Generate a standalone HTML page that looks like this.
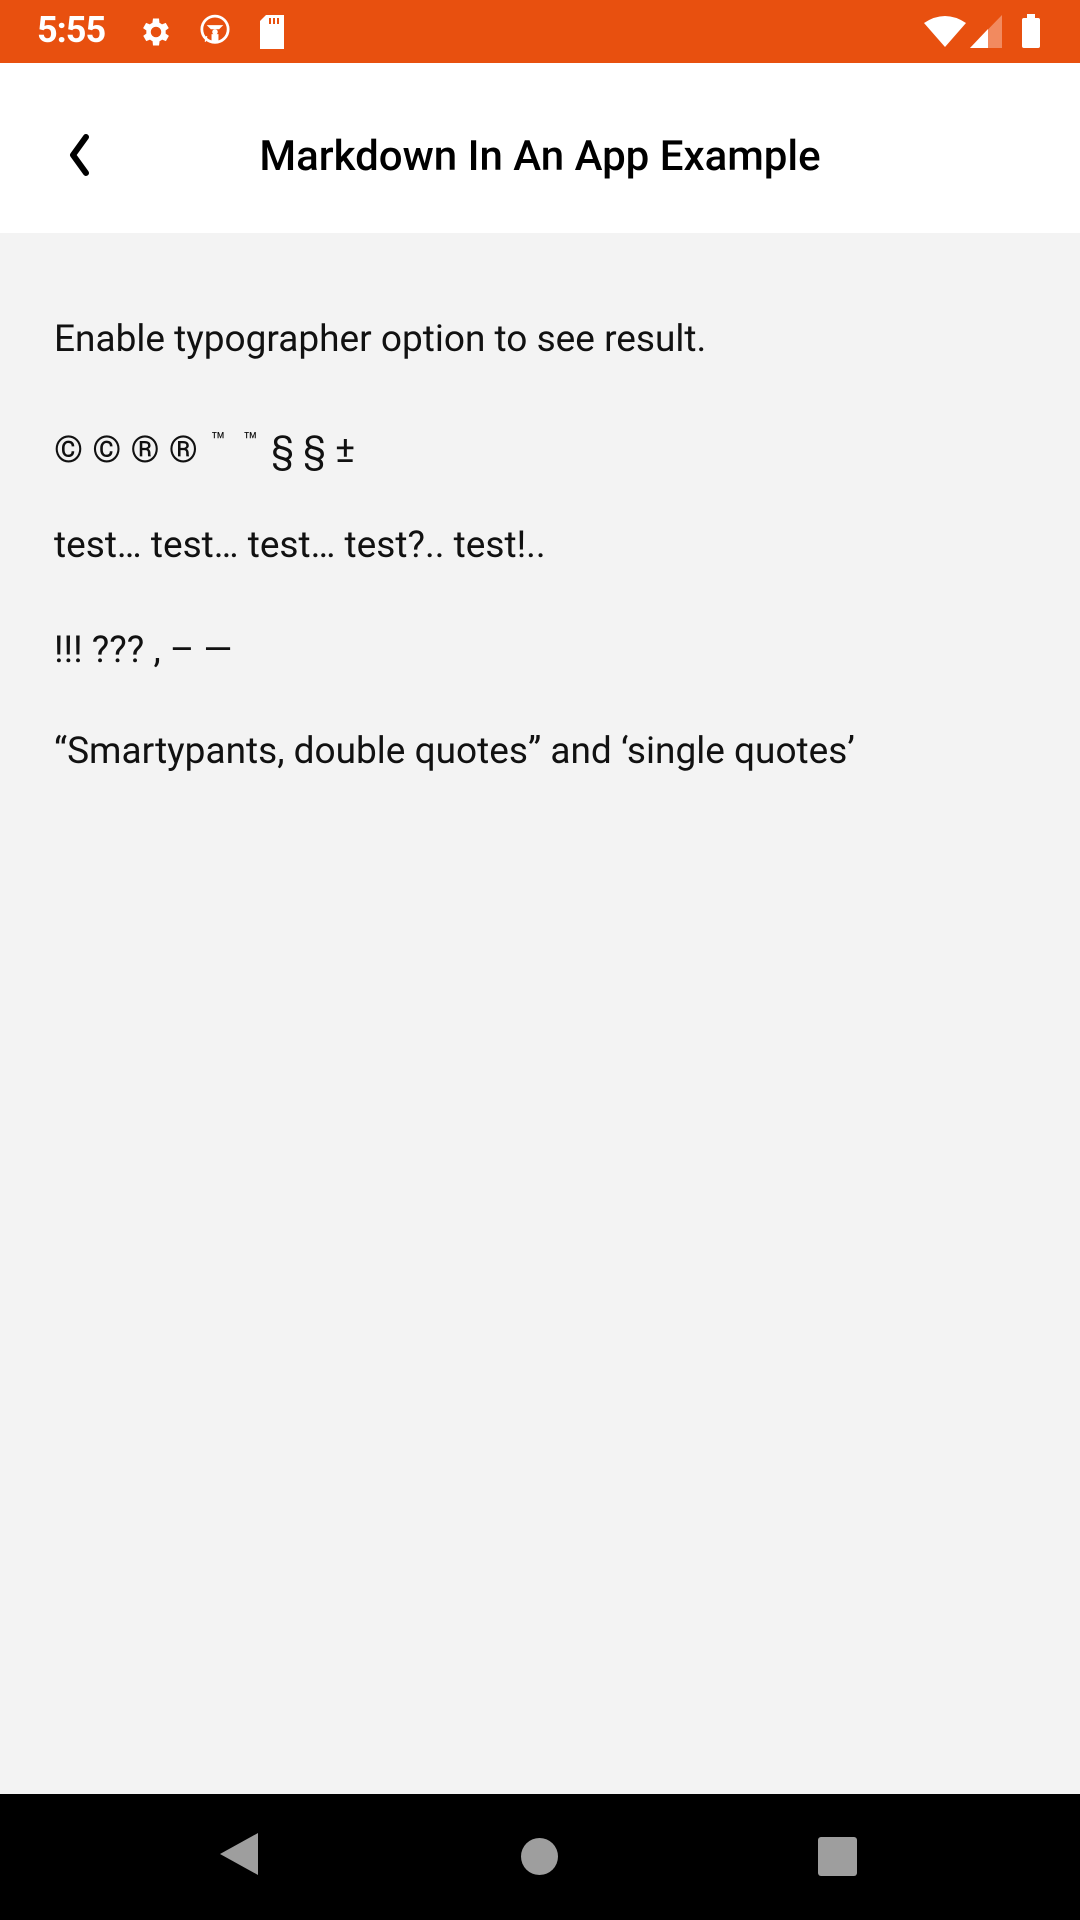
<!DOCTYPE html>
<html><head><meta charset="utf-8"><style>
*{margin:0;padding:0;box-sizing:border-box}
body{width:1080px;height:1920px;background:#f3f3f3;font-family:"Roboto","Liberation Sans",sans-serif;position:relative;overflow:hidden}
.sb{position:absolute;top:0;left:0;width:1080px;height:63px;background:#e8500f}
.time{position:absolute;left:37px;top:9px;color:#fff;font-size:36px;font-weight:bold;letter-spacing:-1px}
.hd{position:absolute;top:63px;left:0;width:1080px;height:170px;background:#fff}
.title{position:absolute;left:0;width:1080px;text-align:center;top:69px;font-size:42px;font-weight:500;color:#000}
.p{position:absolute;left:54px;font-size:37px;line-height:44px;color:#111;white-space:nowrap}
.tm{font-size:24px;line-height:0;position:relative;top:-13px;display:inline-block;margin:0 4px}
.nav{position:absolute;top:1794px;left:0;width:1080px;height:126px;background:#000}
</style></head><body>
<div class="sb">
<div class="time">5:55</div>
<svg style="position:absolute;left:138px;top:14px" width="36" height="36" viewBox="0 0 24 24"><path fill="#fff" d="M19.4 13a7.5 7.5 0 0 0 0-2l2.1-1.6-2-3.5-2.5 1a7 7 0 0 0-1.7-1L15 3h-4l-.4 2.9a7 7 0 0 0-1.7 1l-2.5-1-2 3.5L6.6 11a7.5 7.5 0 0 0 0 2l-2.1 1.6 2 3.5 2.5-1a7 7 0 0 0 1.7 1L11 21h4l.4-2.9a7 7 0 0 0 1.7-1l2.5 1 2-3.5zM13 15.5a3.5 3.5 0 1 1 0-7 3.5 3.5 0 0 1 0 7z" transform="translate(-1 0)"/></svg>
<svg style="position:absolute;left:198px;top:14px" width="34" height="36" viewBox="0 0 24 26"><circle cx="12" cy="11" r="9.5" fill="none" stroke="#fff" stroke-width="2"/><path d="M6 8h12l-3 3h-6z" fill="#fff"/><circle cx="12" cy="13" r="2" fill="#fff"/><path d="M10 15h4v5h-4z M5 20l1-4" fill="#fff" stroke="#fff"/></svg>
<svg style="position:absolute;left:258px;top:15px" width="28" height="34" viewBox="0 0 14 17"><path d="M4 0h9v17H1V3z" fill="#fff"/><path d="M6 1.5v3M8 1.5v3M10 1.5v3" stroke="#e8500f" stroke-width="1"/></svg>
<svg style="position:absolute;left:924px;top:15px" width="42" height="32" viewBox="0 0 42 32"><path d="M0 8Q21-6 42 8L21 32z" fill="#fff"/></svg>
<svg style="position:absolute;left:970px;top:15px" width="32" height="33" viewBox="0 0 32 33"><path d="M0 33L32 0v33z" fill="#f28a5f"/><path d="M0 33L18 14v19z" fill="#fff"/></svg>
<div style="position:absolute;left:1022px;top:18px;width:18px;height:30px;background:#fff;border-radius:2px"></div>
<div style="position:absolute;left:1027px;top:14px;width:8px;height:5px;background:#fff"></div>
</div>
<div class="hd">
<svg style="position:absolute;left:62px;top:70px" width="32" height="44" viewBox="0 0 32 44"><path d="M24 4L11 22l13 18" fill="none" stroke="#000" stroke-width="6" stroke-linecap="round" stroke-linejoin="round"/></svg>
<div class="title">Markdown In An App Example</div>
</div>
<div class="p" style="top:318px">Enable typographer option to see result.</div>
<div class="p" style="top:429px">© © ® ® <span class="tm">™</span> <span class="tm">™</span> § § ±</div>
<div class="p" style="top:524px">test… test… test… test?.. test!..</div>
<div class="p" style="top:629px">!!! ??? ,  – —</div>
<div class="p" style="top:730px">“Smartypants, double quotes” and ‘single quotes’</div>
<div class="nav">
<svg style="position:absolute;left:218px;top:37px" width="42" height="46" viewBox="0 0 42 46"><path d="M40 2L2 23l38 21z" fill="#9e9e9e"/></svg>
<div style="position:absolute;left:521px;top:44px;width:37px;height:37px;border-radius:50%;background:#9e9e9e"></div>
<div style="position:absolute;left:818px;top:43px;width:39px;height:39px;border-radius:3px;background:#9e9e9e"></div>
</div>
</body></html>
